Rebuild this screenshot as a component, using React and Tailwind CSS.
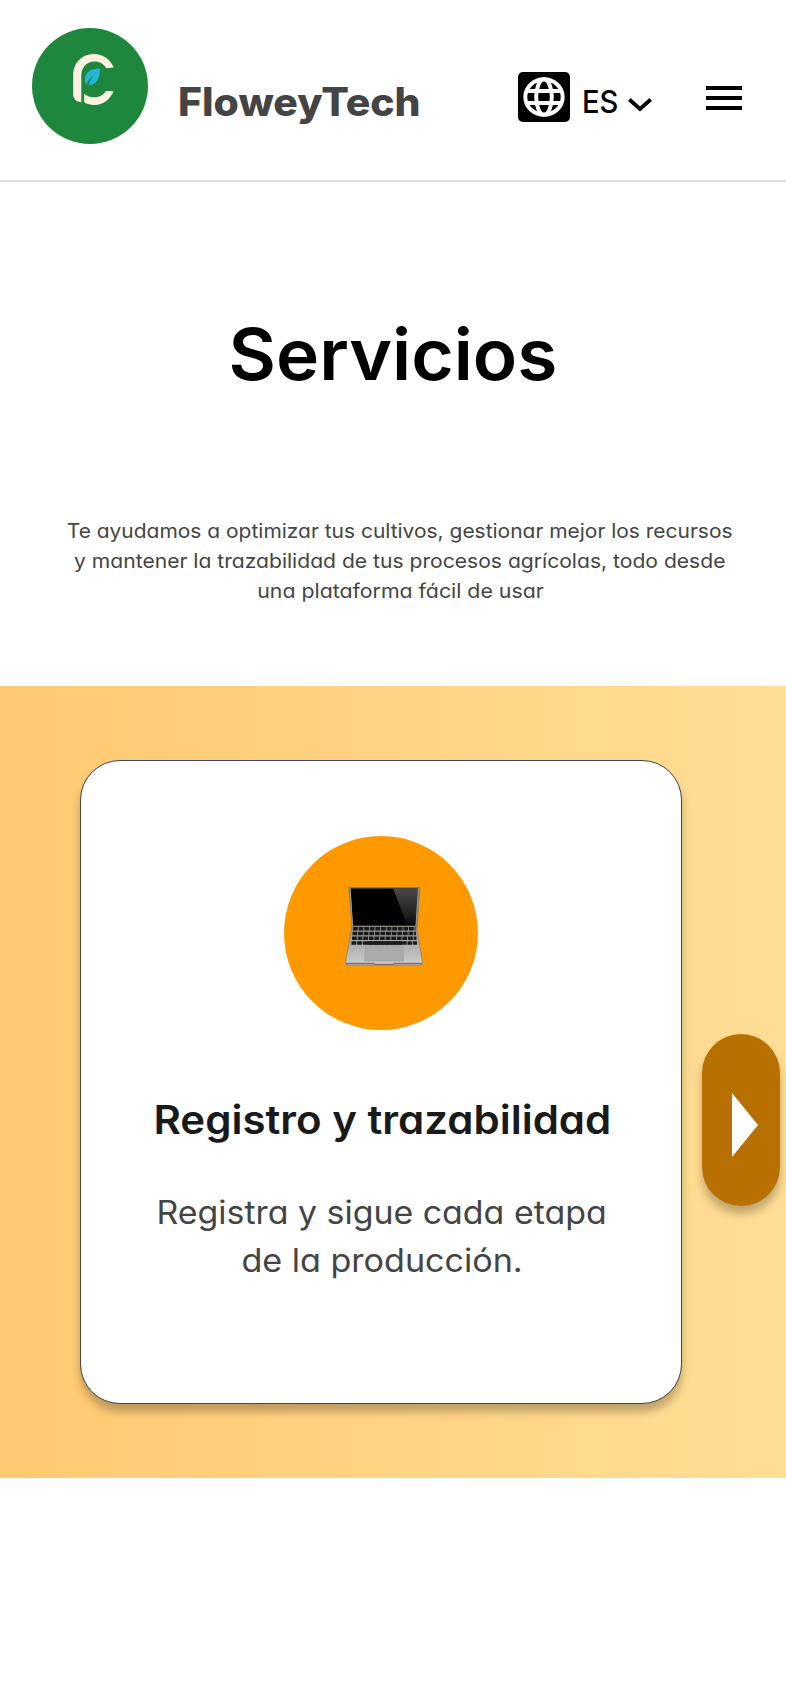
const Brand = () => (
  <svg viewBox="0 0 116 116" className="h-[116px] w-[116px] shrink-0" aria-label="FloweyTech">
    <circle cx="58" cy="58" r="58" fill="#1f873d" />
    <path d="M81.8 39.6 C78.5 31.5 71 26 62 26 C50 26 41.2 35 41.2 47 V66.500 C41.2 71 44.500 74 49.300 74.300 V47.500 C49.300 39 55 33.400 62.300 33.400 C68 33.400 72 36 74.300 40.300 Z" fill="#fdf1df" />
    <path d="M52.200 65.800 C58 71 69.500 70.800 74 63 H81.600 C78 72 70.500 77 62.500 77 C58.500 77 55 76 52.200 74.300 Z" fill="#fdf1df" />
    <path d="M54.5 56.700 C50.500 49 55 40.500 67.800 40.300 C68.300 50 64.500 57 56.600 57.200 C57.800 53 59.700 49.600 62.300 46.600 C58.500 49.500 55.700 52.700 54.500 56.700 Z" fill="#24b5d9" />
  </svg>
);

const Globe = () => (
  <svg viewBox="0 0 52 50" className="h-[50px] w-[52px]">
    <rect width="52" height="50" rx="5" fill="#000" />
    <g fill="none" stroke="#fff" strokeWidth="4">
      <ellipse cx="26" cy="25" rx="18.700" ry="17.700" />
      <ellipse cx="26" cy="25" rx="7.800" ry="17.700" />
      <path d="M9 19 H43 M9 31 H43" />
    </g>
  </svg>
);

const Laptop = () => (
  <svg viewBox="0 0 78 80" className="h-[80px] w-[78px]">
    <defs>
      <linearGradient id="glare" x1="0" y1="0" x2="0" y2="1">
        <stop offset="0" stopColor="#4a4a4a" />
        <stop offset="1" stopColor="#0c0c0c" />
      </linearGradient>
      <linearGradient id="deck" x1="0" y1="0" x2="0" y2="1">
        <stop offset="0" stopColor="#909090" />
        <stop offset="1" stopColor="#cdcdcd" />
      </linearGradient>
    </defs>
    <path d="M3.500 1 H74.500 Q75.500 1 75.300 2.500 L72.500 41 H6.500 L3.500 2.500 Z" fill="#857a68" />
    <path d="M5.500 2.500 H73 L70.500 40 H8 Z" fill="#000" />
    <path d="M48 2.500 H73 L70.500 40 H62.500 Z" fill="url(#glare)" />
    <path d="M73.500 2 L71 40 M5 2 L7.500 40" stroke="#999" strokeWidth="1.100" />
    <path d="M7 40 H71.500 L77.500 76 Q78 79 75 79 H3 Q0 79 .5 76 Z" fill="url(#deck)" stroke="#8b7a60" strokeWidth=".7" />
    <g stroke="#1b1b1b" strokeWidth="3.400" strokeDasharray="4.800 .8">
      <path d="M8 42.800 H70.500" />
      <path d="M7.500 47.500 H71" />
      <path d="M7 52.200 H71.500" />
      <path d="M6.500 57 H72" />
    </g>
    <path d="M22 57 H57" stroke="#1b1b1b" strokeWidth="3.400" />
    <path d="M20.500 60 H57.500 L58.500 75 H19.500 Z" fill="#aaa" stroke="#9a9a9a" strokeWidth=".5" />
    <path d="M1 77.500 H29 L30 78.500 H48 L49 77.500 H77" stroke="#777" strokeWidth="1.300" fill="none" />
  </svg>
);

export default function App() {
  return (
    <div className="flex min-h-[1704px] w-[786px] flex-col bg-white font-['Inter',sans-serif] [font-feature-settings:'cv11']">
      <header className="flex h-[182px] items-start border-b-2 border-[#d9d9d9] pl-8 pt-7">
        <Brand />
        <div className="ml-[30px] mt-[54px] w-[340px] origin-left scale-x-[1.05] text-[39px] font-extrabold leading-[40px] text-[#444]">FloweyTech</div>
        <div className="mt-[44px]"><Globe /></div>
        <div className="ml-3 mt-[54px] w-[46px] origin-left scale-x-[0.94] text-[31px] font-medium leading-[40px] text-black">ES</div>
        <svg viewBox="0 0 24 14" className="mt-[70px] h-[14px] w-6"><path d="M1.300 1.500 L12 11 L22.700 1.500" fill="none" stroke="#000" strokeWidth="3.800" /></svg>
        <div className="ml-[54px] mt-[58px] flex w-9 flex-col gap-[6px]">
          <i className="h-1 bg-black" /><i className="h-1 bg-black" /><i className="h-1 bg-black" />
        </div>
      </header>
      <section className="flex h-[504px] flex-col items-center">
        <h1 className="mt-[132px] scale-x-[1.028] text-[71px] font-semibold leading-[80px] text-black">Servicios</h1>
        <p className="mt-[122px] flex flex-col items-center pl-[14px] text-[20px] leading-[30px] text-[#444]">
          <span className="scale-x-[1.048]">Te ayudamos a optimizar tus cultivos, gestionar mejor los recursos</span>
          <span className="scale-x-[1.055]">y mantener la trazabilidad de tus procesos agrícolas, todo desde</span>
          <span className="scale-x-[1.065]">una plataforma fácil de usar</span>
        </p>
      </section>
      <section className="flex h-[792px] bg-linear-to-r from-[#ffc971] to-[#ffde95] pl-20 pt-[74px]">
        <article className="flex h-[644px] w-[602px] flex-col items-center rounded-[40px] border border-[#444] bg-white pt-[75px] shadow-[0_8px_8px_rgba(0,0,0,0.25)]">
          <div className="flex h-[194px] w-[194px] items-start rounded-full bg-[#ff9900] pl-[61px] pt-[50px]"><Laptop /></div>
          <h2 className="mt-[65px] scale-x-[1.063] pl-[2px] text-[39.500px] font-semibold leading-[50px] text-[#1a1a1a]">Registro y trazabilidad</h2>
          <p className="mt-[44px] flex flex-col items-center pl-[2px] text-[32px] leading-[48px] text-[#444]">
            <span className="scale-x-[1.059]">Registra y sigue cada etapa</span>
            <span className="scale-x-[1.065]">de la producción.</span>
          </p>
        </article>
        <button className="ml-5 mt-[274px] h-[172px] w-[78px] rounded-full bg-[#b87000] pl-[30px] pt-[10px] shadow-[0_8px_8px_rgba(0,0,0,0.25)]" aria-label="Siguiente">
          <svg viewBox="0 0 26 64" className="h-16 w-[26px]"><path d="M0 0 L26 32 L0 64 Z" fill="#fff" /></svg>
        </button>
      </section>
    </div>
  );
}
